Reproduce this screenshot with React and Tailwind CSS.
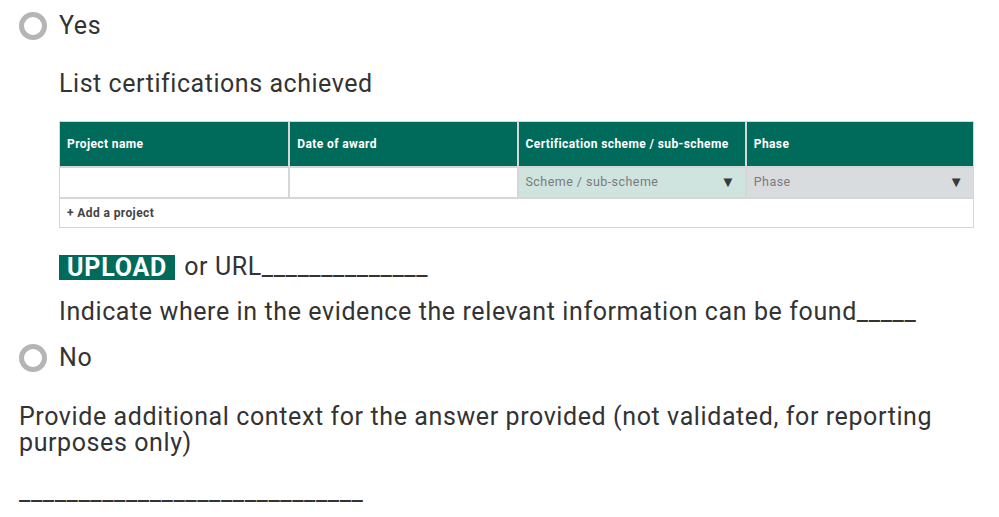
import React from 'react';

const Radio = ({ label }) => (
  <div className="flex items-center gap-[12px]">
    <span className="w-[28px] h-[28px] rounded-full border-[5px] border-[#b5b5b5] bg-white shrink-0" />
    <span className="text-[25px] leading-[32px] tracking-[0.6px]">{label}</span>
  </div>
);

const columns = ['Project name', 'Date of award', 'Certification scheme / sub-scheme', 'Phase'];

const App = () => {
  return (
    <div className="w-[999px] h-[517px] bg-white overflow-hidden text-[#333] font-['Roboto',sans-serif] pl-[19px] pt-[10px]">
      <Radio label="Yes" />

      <div className="pl-[40px]">
        <div className="mt-[26px] text-[25px] leading-[32px] tracking-[0.55px]">List certifications achieved</div>

        {/* Certifications table */}
        <div className="mt-[21px] w-[915px] border border-[#d6d6d6] text-[12px]">
          <div className="grid grid-cols-4 bg-[#006b5b] text-white font-bold h-[44px] tracking-[0.4px]">
            {columns.map((col, i) => (
              <div key={col} className={`flex items-center px-[7px] ${i > 0 ? 'border-l-2 border-[#d6d6d6]' : ''}`}>
                {col}
              </div>
            ))}
          </div>
          <div className="grid grid-cols-4 h-[31px] border-t-2 border-[#d6d6d6] text-[12.5px] tracking-[0.45px]">
            <div className="bg-white" />
            <div className="bg-white border-l-2 border-[#d6d6d6]" />
            <div className="flex items-center justify-between bg-[#cfe3df] border-l-2 border-[#d6d6d6] pl-[7px] pr-[9px] text-[#7b7b7b]">
              <span>Scheme / sub-scheme</span>
              <span className="text-[#3a3a3a] text-[15px]">▼</span>
            </div>
            <div className="flex items-center justify-between bg-[#d9dcdf] border-l-2 border-[#d6d6d6] pl-[7px] pr-[9px] text-[#7b7b7b]">
              <span>Phase</span>
              <span className="text-[#3a3a3a] text-[15px]">▼</span>
            </div>
          </div>
          <div className="h-[30px] border-t-2 border-[#d6d6d6] flex items-center px-[7px] font-bold text-[#444] tracking-[0.4px]">
            + Add a project
          </div>
        </div>

        <div className="mt-[23px] flex items-center text-[25px] leading-[32px] tracking-[0.6px]">
          <span className="bg-[#006b5b] text-white font-bold px-[8px] h-[25px] flex items-center leading-none tracking-[0.8px]">UPLOAD</span>
          <span className="ml-[9px]">or URL______________</span>
        </div>

        <div className="mt-[13px] text-[25px] leading-[32px] tracking-[0.6px]">
          Indicate where in the evidence the relevant information can be found_____
        </div>
      </div>

      <div className="mt-[14px]">
        <Radio label="No" />
      </div>

      <div className="mt-[30px] pr-[50px] text-[25px] leading-[26px] tracking-[0.6px]">
        Provide additional context for the answer provided (not validated, for reporting purposes only)
      </div>
      <div className="mt-[20px] text-[25px] leading-[32px] tracking-[0.6px]">_____________________________</div>
    </div>
  );
};

export default App;
